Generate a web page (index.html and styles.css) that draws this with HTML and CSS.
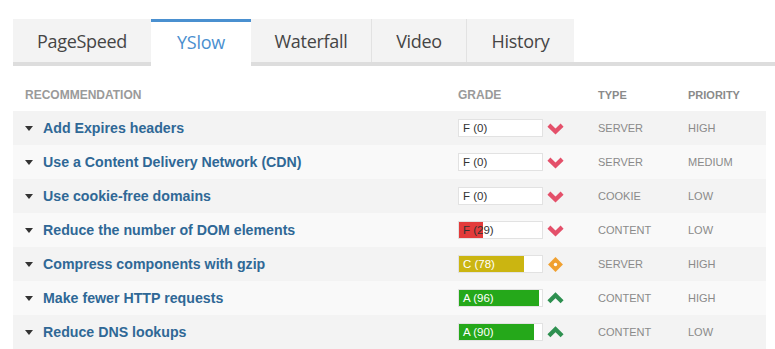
FILE: index.html
```html
<!DOCTYPE html>
<html>
<head>
<meta charset="utf-8">
<link rel="stylesheet" href="styles.css">
</head>
<body>
<div class="page">
  <div class="tabs">
    <div class="tab">PageSpeed</div>
    <div class="tab active">YSlow</div>
    <div class="tab sep">Waterfall</div>
    <div class="tab sep">Video</div>
    <div class="tab hist">History</div>
  </div>
  <div class="table">
    <div class="head">
      <div class="c-rec">RECOMMENDATION</div>
      <div class="c-grade">GRADE</div>
      <div class="c-type">TYPE</div>
      <div class="c-pri">PRIORITY</div>
    </div>

    <div class="row dark">
      <div class="c-rec"><span class="tri"></span><span class="name">Add Expires headers</span></div>
      <div class="c-grade"><div class="bar"><div class="fill red" style="width:0%"></div><span class="lbl">F (0)</span></div>
        <svg class="ic" viewBox="0 0 16 16"><polyline points="1.8,4.8 8,10.8 14.2,4.8" fill="none" stroke="#e4506a" stroke-width="4"/></svg></div>
      <div class="c-type">SERVER</div>
      <div class="c-pri">HIGH</div>
    </div>

    <div class="row light">
      <div class="c-rec"><span class="tri"></span><span class="name">Use a Content Delivery Network (CDN)</span></div>
      <div class="c-grade"><div class="bar"><div class="fill red" style="width:0%"></div><span class="lbl">F (0)</span></div>
        <svg class="ic" viewBox="0 0 16 16"><polyline points="1.8,4.8 8,10.8 14.2,4.8" fill="none" stroke="#e4506a" stroke-width="4"/></svg></div>
      <div class="c-type">SERVER</div>
      <div class="c-pri">MEDIUM</div>
    </div>

    <div class="row dark">
      <div class="c-rec"><span class="tri"></span><span class="name">Use cookie-free domains</span></div>
      <div class="c-grade"><div class="bar"><div class="fill red" style="width:0%"></div><span class="lbl">F (0)</span></div>
        <svg class="ic" viewBox="0 0 16 16"><polyline points="1.8,4.8 8,10.8 14.2,4.8" fill="none" stroke="#e4506a" stroke-width="4"/></svg></div>
      <div class="c-type">COOKIE</div>
      <div class="c-pri">LOW</div>
    </div>

    <div class="row light">
      <div class="c-rec"><span class="tri"></span><span class="name">Reduce the number of DOM elements</span></div>
      <div class="c-grade"><div class="bar"><div class="fill red" style="width:29%"></div><span class="lbl">F (29)</span></div>
        <svg class="ic" viewBox="0 0 16 16"><polyline points="1.8,4.8 8,10.8 14.2,4.8" fill="none" stroke="#e4506a" stroke-width="4"/></svg></div>
      <div class="c-type">CONTENT</div>
      <div class="c-pri">LOW</div>
    </div>

    <div class="row dark">
      <div class="c-rec"><span class="tri"></span><span class="name">Compress components with gzip</span></div>
      <div class="c-grade"><div class="bar"><div class="fill yellow" style="width:78%"></div><span class="lbl light-t">C (78)</span></div>
        <svg class="ic" viewBox="0 0 16 16"><polygon points="8,1 15,8 8,15 1,8" fill="#f0a030"/><circle cx="8" cy="8" r="1.6" fill="#fff"/></svg></div>
      <div class="c-type">SERVER</div>
      <div class="c-pri">HIGH</div>
    </div>

    <div class="row light">
      <div class="c-rec"><span class="tri"></span><span class="name">Make fewer HTTP requests</span></div>
      <div class="c-grade"><div class="bar"><div class="fill green" style="width:96%"></div><span class="lbl light-t">A (96)</span></div>
        <svg class="ic" viewBox="0 0 16 16"><polyline points="1.8,11 8,5 14.2,11" fill="none" stroke="#2e9050" stroke-width="4"/></svg></div>
      <div class="c-type">CONTENT</div>
      <div class="c-pri">HIGH</div>
    </div>

    <div class="row dark">
      <div class="c-rec"><span class="tri"></span><span class="name">Reduce DNS lookups</span></div>
      <div class="c-grade"><div class="bar"><div class="fill green" style="width:90%"></div><span class="lbl light-t">A (90)</span></div>
        <svg class="ic" viewBox="0 0 16 16"><polyline points="1.8,11 8,5 14.2,11" fill="none" stroke="#2e9050" stroke-width="4"/></svg></div>
      <div class="c-type">CONTENT</div>
      <div class="c-pri">LOW</div>
    </div>
  </div>
</div>
</body>
</html>
```

FILE: styles.css
```css
html, body {
  margin: 0;
  padding: 0;
  background: #fff;
}
body {
  font-family: "Liberation Sans", Arial, sans-serif;
  overflow: hidden;
}
.page {
  padding: 19px 0 0 13px;
}
.tabs {
  display: flex;
  border-bottom: 4px solid #dddddd;
  height: 43px;
}
.tab {
  box-sizing: border-box;
  height: 43px;
  background: #f3f3f3;
  color: #454545;
  font-family: "Open Sans", "Liberation Sans", sans-serif;
  font-size: 18px;
  letter-spacing: -0.3px;
  display: flex;
  align-items: center;
  justify-content: center;
  padding-top: 1px;
}
.tab:nth-child(1) { width: 138px; }
.tab:nth-child(2) { width: 100px; }
.tab:nth-child(3) { width: 121px; }
.tab:nth-child(4) { width: 95px; }
.tab:nth-child(5) { width: 107px; }
.tab.sep {
  border-right: 1px solid #e2e2e2;
}
.tab.active {
  background: #fff;
  color: #4a8fcf;
  border-top: 3px solid #4a90d0;
  height: 47px;
  margin-bottom: -4px;
  padding-top: 0;
  padding-bottom: 4px;
}
.table {
  width: 753px;
}
.head, .row {
  display: grid;
  grid-template-columns: 445px 140px 90px 1fr;
  align-items: center;
}
.head {
  height: 45px;
  padding-top: 13px;
  box-sizing: border-box;
  color: #9a9a9a;
  font-size: 12px;
  font-weight: bold;
}
.head .c-rec {
  padding-left: 12px;
}
.row {
  height: 34px;
}
.row.dark { background: #f3f3f3; }
.row.light { background: #f9f9f9; }
.row .c-rec {
  padding-left: 12px;
  display: flex;
  align-items: center;
}
.tri {
  width: 0;
  height: 0;
  border-left: 4px solid transparent;
  border-right: 4px solid transparent;
  border-top: 5px solid #333;
  margin-right: 10px;
  margin-top: 1px;
}
.name {
  color: #2f6896;
  font-size: 14.2px;
  font-weight: bold;
}
.c-grade {
  display: flex;
  align-items: center;
}
.bar {
  position: relative;
  box-sizing: border-box;
  width: 85px;
  height: 18px;
  background: #fff;
  border: 1px solid #e2e2e2;
}
.fill {
  height: 100%;
}
.fill.red { background: #e33b3b; }
.fill.yellow { background: #cbb511; }
.fill.green { background: #25a81a; }
.lbl {
  position: absolute;
  left: 4px;
  top: 2px;
  font-size: 11.5px;
  color: #333;
}
.lbl.light-t { color: #fff; }
.ic {
  width: 17px;
  height: 17px;
  margin-left: 4px;
}
.c-type, .c-pri {
  color: #8a8a8a;
  font-size: 11px;
}
```
